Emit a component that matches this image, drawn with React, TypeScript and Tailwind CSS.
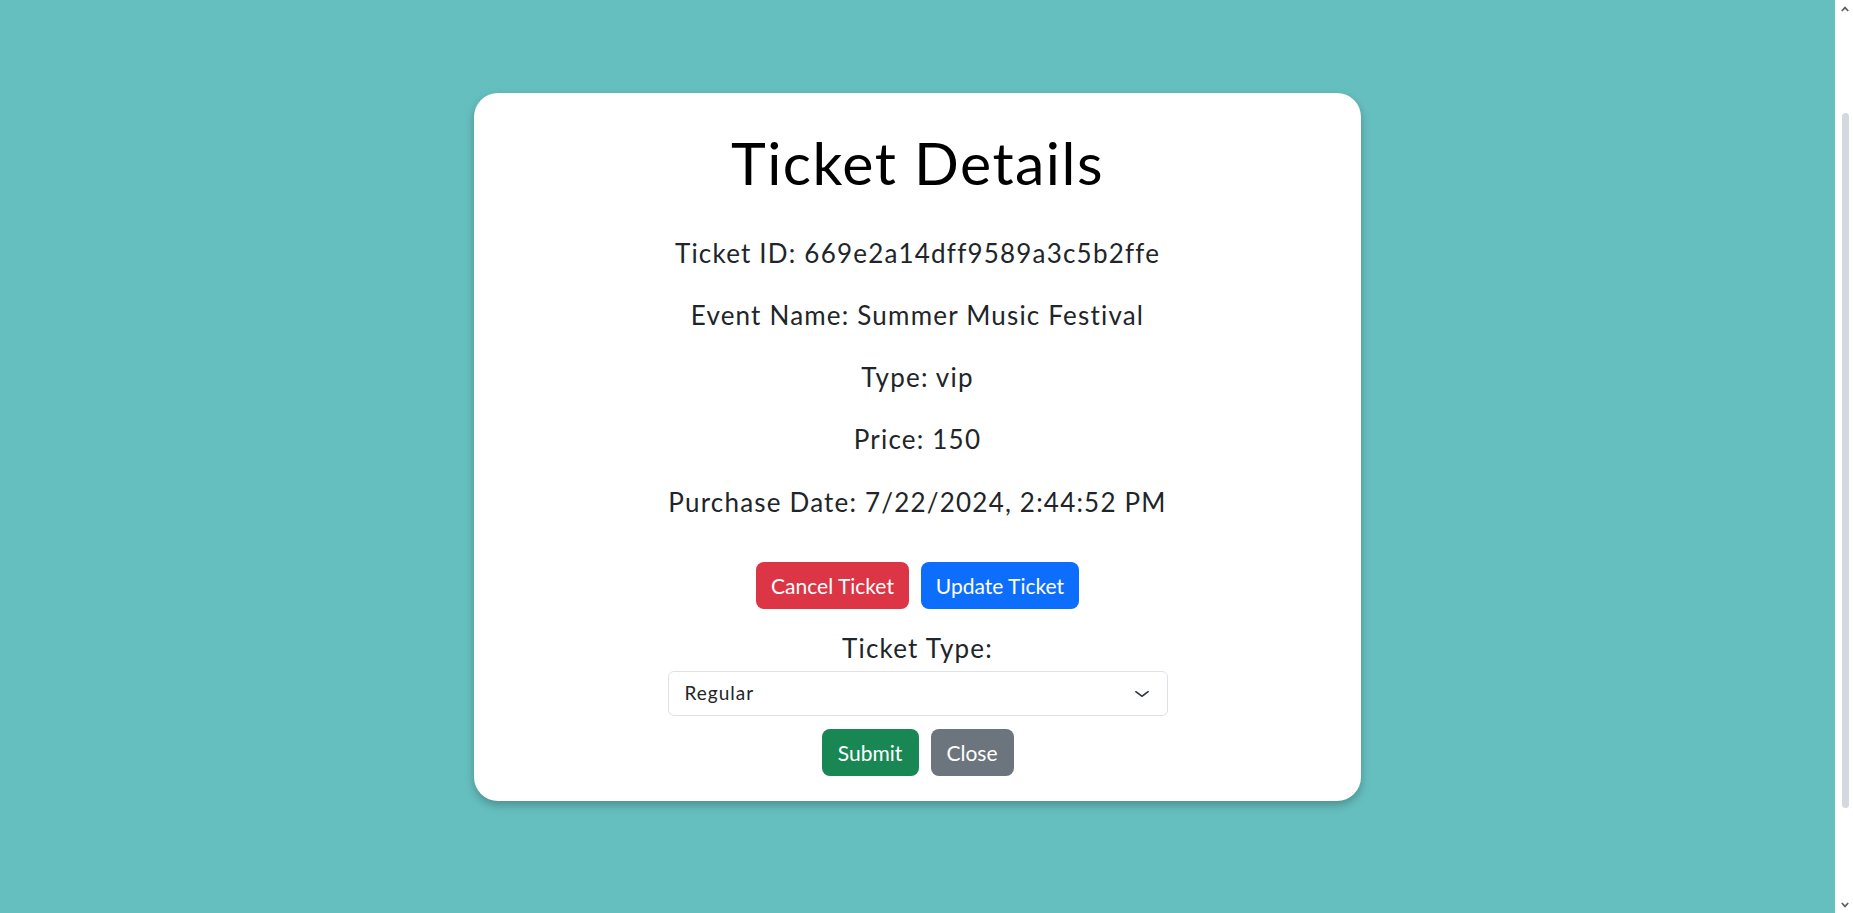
import React from "react";

function Chevron() {
  return (
    <svg width="16" height="12" viewBox="0 0 16 16" preserveAspectRatio="none" className="shrink-0">
      <path d="m2 5 6 6 6-6" fill="none" stroke="#343a40" strokeWidth="2" strokeLinecap="round" strokeLinejoin="round" />
    </svg>
  );
}

function ScrollArrow({ up }: { up: boolean }) {
  return (
    <svg width="8" height="6" viewBox="0 0 8 6">
      <path
        d={up ? "M0.8 5 L4 1.6 L7.2 5" : "M0.8 1 L4 4.4 L7.2 1"}
        fill="none"
        stroke="#606060"
        strokeWidth="1.8"
        strokeLinejoin="miter"
      />
    </svg>
  );
}

export default function App() {
  const rows = [
    "Ticket ID: 669e2a14dff9589a3c5b2ffe",
    "Event Name: Summer Music Festival",
    "Type: vip",
    "Price: 150",
    "Purchase Date: 7/22/2024, 2:44:52 PM",
  ];

  return (
    <div className="flex h-screen overflow-hidden font-['Lato',sans-serif]">
      <main className="flex-1 bg-[#66bfbf] pt-[93px]">
        <div className="mx-auto flex w-[887px] flex-col items-center rounded-3xl bg-white pt-[34px] pb-[25px] shadow-[0_4px_10px_rgba(0,0,0,0.25)]">
          <h1 className="h-[72px] text-[59px] leading-[72px] tracking-[1.5px] text-black">Ticket Details</h1>

          <div className="mt-[35.5px] flex flex-col items-center gap-[26.25px] text-[#212529]">
            {rows.map((r) => (
              <p key={r} className="h-[36px] text-[26px] leading-[36px] tracking-[1.2px]">
                {r}
              </p>
            ))}
          </div>

          <div className="mt-[42.5px] flex gap-[12px]">
            <button className="flex h-[47px] w-[153px] items-center justify-center rounded-lg bg-[#dc3545] text-[21px] text-white">
              Cancel Ticket
            </button>
            <button className="flex h-[47px] w-[158px] items-center justify-center rounded-lg bg-[#0d6efd] text-[21px] text-white">
              Update Ticket
            </button>
          </div>

          <label className="mt-[21px] h-[36px] text-[26px] leading-[36px] tracking-[1.2px] text-[#212529]">Ticket Type:</label>

          <div className="mt-[5px] flex h-[45px] w-[500px] items-center justify-between rounded-md border border-[#dee2e6] bg-white pl-[16px] pr-[17px]">
            <span className="text-[19px] tracking-[1px] text-[#212529]">Regular</span>
            <Chevron />
          </div>

          <div className="mt-[13px] flex gap-[12px]">
            <button className="flex h-[47px] w-[97px] items-center justify-center rounded-lg bg-[#198754] text-[21px] text-white">
              Submit
            </button>
            <button className="flex h-[47px] w-[83px] items-center justify-center rounded-lg bg-[#6c757d] text-[21px] text-white">
              Close
            </button>
          </div>
        </div>
      </main>

      <aside className="flex w-[18px] flex-col bg-white">
        <div className="flex h-[17px] items-center justify-center pl-[2px]">
          <ScrollArrow up />
        </div>
        <div className="flex-1 pl-[2px]">
          <div className="mx-auto mt-[96px] h-[695px] w-[7px] rounded-full bg-[#d3d9df]" />
        </div>
        <div className="flex h-[17px] items-center justify-center pl-[2px]">
          <ScrollArrow up={false} />
        </div>
      </aside>
    </div>
  );
}
